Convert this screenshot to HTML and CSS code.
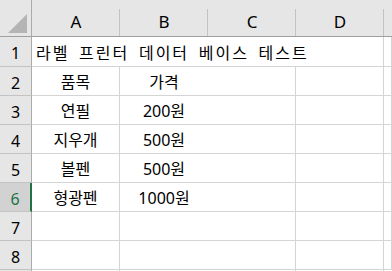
FILE: index.html
```html
<!DOCTYPE html>
<html lang="ko">

<head>
  <meta charset="UTF-8">
  <meta name="viewport" content="width=device-width, initial-scale=1.0">
  <title>라벨 프린터 데이터</title>
  <link rel="stylesheet" href="styles.css">
</head>

<body>
  <div class="sheet">
    <!-- 열 머리글 -->
    <div class="corner">
      <svg width="32" height="36" viewBox="0 0 32 36">
        <polygon points="8,33 27,33 27,14" fill="#b4b4b4" />
      </svg>
    </div>
    <div class="col-head">A</div>
    <div class="col-head">B</div>
    <div class="col-head">C</div>
    <div class="col-head">D</div>
    <div class="col-head last"></div>

    <!-- 1행 -->
    <div class="row-head first">1</div>
    <div class="cell title first">라벨 프린터 데이터 베이스 테스트</div>
    <div class="cell first"></div>

    <div class="row-head">2</div>
    <div class="cell center">품목</div>
    <div class="cell center">가격</div>
    <div class="cell"></div>
    <div class="cell"></div>
    <div class="cell"></div>

    <div class="row-head">3</div>
    <div class="cell center">연필</div>
    <div class="cell center">200원</div>
    <div class="cell"></div>
    <div class="cell"></div>
    <div class="cell"></div>

    <div class="row-head">4</div>
    <div class="cell center">지우개</div>
    <div class="cell center">500원</div>
    <div class="cell"></div>
    <div class="cell"></div>
    <div class="cell"></div>

    <div class="row-head">5</div>
    <div class="cell center">볼펜</div>
    <div class="cell center">500원</div>
    <div class="cell"></div>
    <div class="cell"></div>
    <div class="cell"></div>

    <div class="row-head selected">6</div>
    <div class="cell center">형광펜</div>
    <div class="cell center">1000원</div>
    <div class="cell"></div>
    <div class="cell"></div>
    <div class="cell"></div>

    <div class="row-head">7</div>
    <div class="cell"></div>
    <div class="cell"></div>
    <div class="cell"></div>
    <div class="cell"></div>
    <div class="cell"></div>

    <div class="row-head">8</div>
    <div class="cell"></div>
    <div class="cell"></div>
    <div class="cell"></div>
    <div class="cell"></div>
    <div class="cell"></div>

    <!-- 9행: 화면 아래에 잘림 -->
    <div class="row-head"></div>
    <div class="cell"></div>
    <div class="cell"></div>
    <div class="cell"></div>
    <div class="cell"></div>
    <div class="cell"></div>
  </div>
</body>

</html>
```

FILE: styles.css
```css
* {
  margin: 0;
  padding: 0;
  box-sizing: border-box;
}

body {
  background-color: #fff;
  color: #000;
  font-family: "Noto Sans", "Noto Sans CJK KR", sans-serif;
  font-size: 16px;
  overflow: hidden;
  height: 271px;
}

.sheet {
  display: grid;
  grid-template-columns: 32px repeat(4, 88px) 1fr;
  grid-template-rows: 37px 30px;
  grid-auto-rows: 29px;
}

.corner {
  background-color: #e6e6e6;
  border-right: 1px solid #ababab;
  border-bottom: 1px solid #9f9f9f;
}

.corner svg {
  display: block;
}

.col-head {
  background: linear-gradient(#c3c3c3, #c3c3c3) right bottom / 1px 27px no-repeat, #e6e6e6;
  border-bottom: 1px solid #9f9f9f;
  display: flex;
  align-items: center;
  justify-content: center;
  font-size: 17px;
  padding-top: 7px;
}

.col-head.last {
  background: #e6e6e6;
}

.row-head {
  background-color: #e6e6e6;
  border-right: 1px solid #ababab;
  border-bottom: 1px solid #c3c3c3;
  display: flex;
  align-items: center;
  justify-content: center;
  padding-top: 3px;
}

.row-head.selected {
  background-color: #d2d2d2;
  border-right: 2px solid #217346;
  color: #217346;
}

.cell {
  border-right: 1px solid #d4d4d4;
  border-bottom: 1px solid #d4d4d4;
  display: flex;
  align-items: center;
  white-space: nowrap;
}

.cell:last-child,
.cell:nth-child(6n) {
  border-right: none;
}

.center {
  justify-content: center;
}

.title {
  grid-column: span 4;
  padding-left: 4px;
  letter-spacing: 2px;
  word-spacing: 3.5px;
}
```
